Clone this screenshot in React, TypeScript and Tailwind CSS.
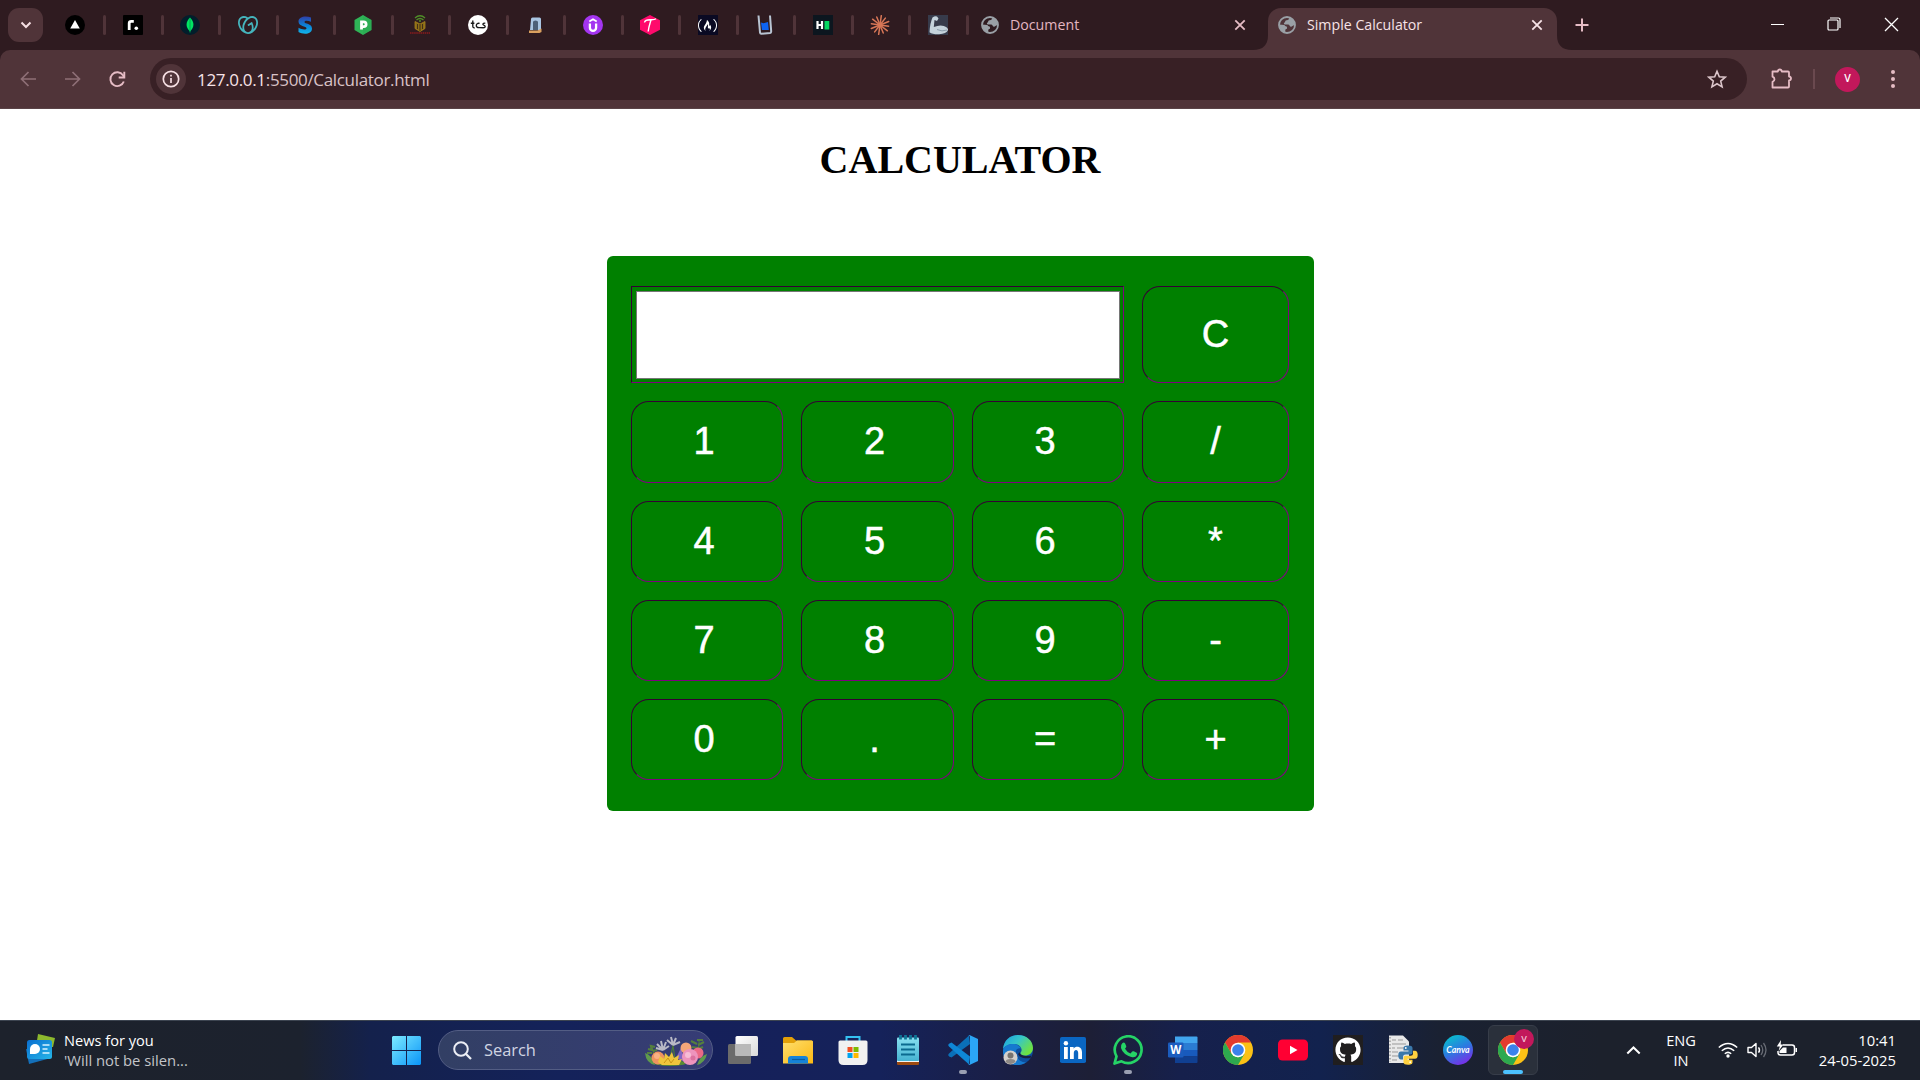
import React from "react";
import { SiGodaddy, SiFreecodecamp } from "react-icons/si";
import { FaGithub } from "react-icons/fa";

const Ico = ({ size = 20, box = "0 0 20 20", children }: { size?: number; box?: string; children: React.ReactNode }) => (
  <svg width={size} height={size} viewBox={box} fill="none" className="block shrink-0">{children}</svg>
);

const rays = Array.from({ length: 12 }, (_, i) => i * 30 + 8);

const favicons: React.ReactNode[] = [
  <Ico><circle cx="10" cy="10" r="10" fill="#000" /><path d="M10 5l4.800 8.600H5.200z" fill="#fff" /></Ico>,
  <Ico><rect width="20" height="20" rx="1" fill="#000" /><path d="M6.200 15V8.300q0-2 2-2h2.600" stroke="#fff" strokeWidth="2.800" /><circle cx="13.300" cy="13.300" r="1.800" fill="#fff" /></Ico>,
  <Ico><circle cx="10" cy="10" r="10" fill="#021e2b" /><path d="M10 2.500c4.500 4.500 4.700 9.500 0 14-4.700-4.500-4.500-9.500 0-14z" fill="#00e563" /><path d="M10 3v14.500" stroke="#00a050" strokeWidth=".9" /></Ico>,
  <SiGodaddy size={20} color="#45b5bd" />,
  <Ico><defs><linearGradient id="sg" x1="0" y1="0" x2="0" y2="1"><stop stopColor="#2f3fa8" /><stop offset=".55" stopColor="#0a86d8" /><stop offset="1" stopColor="#12b4e8" /></linearGradient></defs><path d="M16 2.500v4.200c-3-1.300-6.500-1.500-6.500.3 0 2 7.500 1.300 7.500 6.500 0 6-8.500 6.500-13.500 3.600v-4.300c3.500 2 8 2.200 8 .4 0-2-8-1.600-8-6.700C3.500 1 11.500.500 16 2.500z" fill="url(#sg)" /></Ico>,
  <Ico><path d="M10 0l8.500 5v10L10 20l-8.500-5V5z" fill="#2fb457" /><path d="M10 1v18l8.500-4V5z" fill="#27a350" opacity=".4" /><path d="M8.500 14.500V6.800h2.200a2.400 2.400 0 010 4.800H8.500" stroke="#fff" strokeWidth="2.800" /></Ico>,
  <Ico><path d="M5 3q5-4.500 10 0M6.500 5q3.500-3 7 0" stroke="#4f8f28" strokeWidth="1.300" /><circle cx="10" cy="6" r="1" fill="#4f8f28" /><path d="M5 6.500l5 2.500 5-2.500v7L10 16.500l-5-3z" fill="#8a6c17" stroke="#a5801c" strokeWidth=".8" /><path d="M7.500 9v5M12.500 9v5M10 9v7" stroke="#3a2718" strokeWidth=".9" /><path d="M0 18h20" stroke="#8a1d1d" strokeWidth="1.600" strokeDasharray="1.500 .6" /></Ico>,
  <Ico><circle cx="10" cy="10" r="10" fill="#fff" /><path d="M4.800 5.500v5.700q0 1.900 2 1.600M2.800 8.200h3.600M11.600 8.400c-4.200-1-4.600 5 0 4.200l4 .1c2.500-.3 1.500-2.100.2-2.600-1.800-.8-.5-2.400 1.500-1.700" stroke="#1a1a1a" strokeWidth="1.350" /></Ico>,
  <Ico><path d="M6 4q0-1.500 1.500-1.500h7q1.500 0 1.500 1.500v11H5z" fill="#a9c5e2" /><path d="M8 7q0-1.500 2.500-1.500T13 7v8H8z" fill="#4c6078" /><path d="M4 15.500h8.500l4-2v3.500l-2 1H4z" fill="#d9a05f" /></Ico>,
  <Ico><circle cx="10" cy="10" r="10" fill="#a435f0" /><path d="M6.300 6.500L10 4.300l3.700 2.200" stroke="#fff" strokeWidth="1.800" /><path d="M6.900 8.500v4.200a3.100 3.100 0 006.200 0V8.500" stroke="#fff" strokeWidth="2.300" /></Ico>,
  <Ico><path d="M10 0l10 5.200v9.600L10 20 0 14.800V5.200z" fill="#ff0a6c" /><path d="M4.500 7.500c.5-3 4-2.600 7-2.700 2 0 3.500-.3 4.500-1M11 5c-1 3.500-2.300 6.500-2.800 11.500" stroke="#fff" strokeWidth="1.400" /></Ico>,
  <span className="flex h-5 w-5 items-center justify-center bg-[#0a0a23]"><SiFreecodecamp size={19} color="#fff" /></span>,
  <Ico><path d="M3.500 .5l1.500 17q.2 1.300 1.500 1.200l8.500-.7q1.200-.2 1.200-1.500L15 .5" stroke="#b8c4d2" strokeWidth="2" /><path d="M6 7.500l2.500.8 4.500-1.300.8 8H7z" fill="#0d63f2" /></Ico>,
  <Ico><rect width="20" height="20" fill="#0c161f" /><path d="M4.500 6v8M9 6v8M4.500 10H9" stroke="#fff" strokeWidth="2.200" /><rect x="11.500" y="6" width="4.800" height="8.500" fill="#05d862" /></Ico>,
  <Ico>{rays.map((a, i) => <path key={a} d={i % 2 ? "M10 10V1.300" : "M10 10V.6"} stroke="#d97757" strokeWidth="1.500" strokeLinecap="round" transform={`rotate(${a} 10 10)`} />)}</Ico>,
  <Ico><rect width="20" height="20" fill="#373b4b" /><path d="M4.500 2.500Q7 .5 9 1.500l1.500 2L9 6 6.500 5 5.800 12q6-2.500 10-1 4.500 1.500 4.200 4-1.500 4-9 4.200-6.500.2-9.500-2Q2 8 4.500 2.500z" fill="#c5d2db" /><path d="M9 14.500q5 2.500 10 .5" stroke="#8b9dab" /></Ico>,
];

const Globe = () => (
  <Ico size={18}><circle cx="10" cy="10" r="8.900" stroke="#9aa0a6" strokeWidth="2" /><path d="M12.200 1.500c1 2-1.200 3.300-2.700 3.300-1.700 0-1.200 2.200-2.400 2.700-1 .5-.6 2 .6 2h3.500c1.800 0 1.500 2.300 3 2.500 1.600.200 1.700-1.500 4.500-2 0-5-3-7.500-6.500-8.500zM1.500 9.500l5.600.500c1 2 3 1 3 3s-2 1-2 2.800v2.700C4 17.500 1 14 1.500 9.500z" fill="#9aa0a6" /></Ico>
);

const X = ({ c }: { c: string }) => (
  <Ico size={12} box="0 0 12 12"><path d="M1.300 1.300l9.400 9.400M10.700 1.300L1.300 10.700" stroke={c} strokeWidth="1.800" /></Ico>
);

const TabStrip = () => (
  <div className="flex h-[50px] bg-[#2f1b20]">
    <div className="ml-2 mt-2 flex h-[34px] w-[35px] items-center justify-center rounded-[11px] bg-[#503439]">
      <Ico size={12} box="0 0 12 12"><path d="M1.500 3.500L6 8l4.500-4.500" stroke="#f6dfe3" strokeWidth="2" /></Ico>
    </div>
    <div className="ml-[5.500px] flex">
      {favicons.map((f, i) => (
        <div key={i} className="flex h-[50px] w-[57.5px] items-center">
          <div className="ml-[16.5px] flex w-5 justify-center">{f}</div>
          <div className="ml-[18px] mb-px h-5 w-[3px] shrink-0 rounded-full bg-[#503439]" />
        </div>
      ))}
    </div>
    <div className="flex h-[50px] w-[299.5px] shrink-0 items-center pl-[12.5px]">
      <Globe />
      <span className="ml-[11px] font-['Open_Sans'] text-[14.2px] text-[#e3b6c0]">Document</span>
      <div className="ml-auto mr-[22px]"><X c="#e6bcc5" /></div>
    </div>
    <div className="relative mt-[8px] flex h-[42px] w-[289px] shrink-0 items-center rounded-t-[13px] bg-[#503439] pb-2 pl-[10px]">
      <svg className="absolute bottom-0 -left-[15px]" width="15" height="15"><path d="M15 0v15H0Q15 15 15 0z" fill="#503439" /></svg>
      <svg className="absolute bottom-0 -right-[15px]" width="15" height="15"><path d="M0 0v15h15Q0 15 0 0z" fill="#503439" /></svg>
      <Globe />
      <span className="ml-[11px] font-['Open_Sans'] text-[14.2px] text-[#f7e3e7]">Simple Calculator</span>
      <div className="ml-auto mr-[14px]"><X c="#f7e3e7" /></div>
    </div>
    <div className="ml-[18px] flex h-[50px] items-center"><Ico size={14} box="0 0 14 14"><path d="M7 .5v13M.5 7h13" stroke="#e6bcc5" strokeWidth="2" /></Ico></div>
    <div className="ml-auto flex h-[48px] items-center">
      <div className="mr-[43px] h-px w-[13px] bg-white" />
      <Ico size={14} box="0 0 14 14"><path d="M3 1h8.500q1.500 0 1.500 1.500V11" stroke="#fff" strokeWidth="1.200" /><rect x="1" y="3" width="10" height="10" rx="1" stroke="#fff" strokeWidth="1.200" /></Ico>
      <div className="ml-[43px] mr-[21px]"><Ico size={15} box="0 0 15 15"><path d="M1 1l13 13M14 1L1 14" stroke="#fff" strokeWidth="1.300" /></Ico></div>
    </div>
  </div>
);

const Toolbar = () => (
  <div className="bg-[#2f1b20]">
    <div className="flex h-[59px] rounded-t-[10px] border-b border-[#5a4347] bg-[#503439] pt-2">
      <div className="flex h-[42px] w-[150px] items-center pl-[20px]">
        <Ico size={16} box="0 0 16 16"><path d="M16 8H2M8.500 1L1.500 8l7 7" stroke="#8e6f76" strokeWidth="1.700" /></Ico>
        <div className="ml-[29px]"><Ico size={16} box="0 0 16 16"><path d="M0 8h14M7.500 1l7 7-7 7" stroke="#8e6f76" strokeWidth="1.700" /></Ico></div>
        <div className="ml-[28px]"><Ico size={17} box="0 0 17 17"><path d="M14.800 10.500A6.900 6.900 0 1114 4.300L15 6" stroke="#e6bcc5" strokeWidth="1.900" /><path d="M15.300.800v5.700H9.700" stroke="#e6bcc5" strokeWidth="1.900" /></Ico></div>
      </div>
      <div className="flex h-[42px] w-[1597px] items-center rounded-full bg-[#382025] pl-[6px]">
        <div className="flex h-[30px] w-[30px] items-center justify-center rounded-full bg-[#503439]">
          <Ico size={18} box="0 0 18 18"><circle cx="9" cy="9" r="7.700" stroke="#f6dfe3" strokeWidth="1.700" /><path d="M9 8v5M9 4.800v1.800" stroke="#f6dfe3" strokeWidth="1.700" /></Ico>
        </div>
        <span className="ml-[11px] mt-px font-['Open_Sans'] text-[17px] tracking-[-0.33px] text-[#d8c2c7]"><span className="text-[#f7e3e7]">127.0.0.1</span>:5500/Calculator.html</span>
        <div className="ml-auto mr-[20px]"><Ico size={20}><path d="M10 2.200l2.300 5.500 5.900.500-4.500 3.900 1.400 5.800L10 14.800l-5.100 3.100 1.400-5.800-4.500-3.900 5.900-.500z" stroke="#dcc6cb" strokeWidth="1.600" /></Ico></div>
      </div>
      <div className="flex h-[42px] items-center pl-[23px]">
        <Ico size={22} box="0 0 22 22"><path d="M2.500 3.500h5.300q.3-2 2-2t2 2h6.200q1 0 1 1v4q2 .3 2 2t-2 2v6q0 1-1 1H2.500v-5.600q2-.7 2-2.600t-2-2.600z" stroke="#e6bcc5" strokeWidth="1.800" strokeLinejoin="round" /></Ico>
        <div className="ml-[21px] h-5 w-[2px] bg-[#6a494f]" />
        <div className="ml-[20px] flex h-[25px] w-[25px] items-center justify-center rounded-full bg-[#c2185b] pb-px font-['Open_Sans'] text-[10.5px] font-semibold text-white">V</div>
        <div className="ml-[30.5px] flex flex-col gap-[3px]">
          {[0, 1, 2].map((i) => <div key={i} className="h-[4px] w-[4px] rounded-full bg-[#e6bcc5]" />)}
        </div>
      </div>
    </div>
  </div>
);

const keyCls = "flex items-center justify-center rounded-[18px] border border-t-[#330033] border-l-[#330033] border-r-[#800080] border-b-[#800080] pb-[2px]";
const rows = [["1", "2", "3", "/"], ["4", "5", "6", "*"], ["7", "8", "9", "-"], ["0", ".", "=", "+"]];

const Calculator = () => (
  <main className="flex h-[911px] flex-col items-center bg-white">
    <h1 className="mt-[28px] h-[46px] font-['Liberation_Serif'] text-[40px] leading-[46px] font-bold text-black">CALCULATOR</h1>
    <div className="mt-[73px] mr-[-1px] grid h-[555px] w-[707px] grid-cols-[152px_153px_152px_147px] grid-rows-[97px_82px_repeat(3,81px)] gap-[18px] rounded-[6px] bg-[#008000] px-6 py-[30px] font-['Liberation_Sans'] text-[38px] leading-none text-white [-webkit-text-stroke:0.5px_white]">
      <div className="col-span-3 border border-t-[#330033] border-l-[#330033] border-r-[#800080] border-b-[#800080] pt-[4px] pr-[3px] pb-[3px] pl-[4px]">
        <div className="h-full w-full border border-[#767676] bg-white" />
      </div>
      <div className={keyCls}>C</div>
      {rows.flat().map((k, i) => (
        <div key={k} className={keyCls}>
          <span className={i % 4 < 3 ? "mr-[6px]" : ""}>{k}</span>
        </div>
      ))}
    </div>
  </main>
);

const Chrome = () => (
  <Ico size={30} box="0 0 30 30">
    <circle cx="15" cy="15" r="15" fill="#fbc116" />
    <path d="M2 7.500A15 15 0 0128 7.500H15L8.500 18.800z" fill="#e33b2e" />
    <path d="M2 7.500A15 15 0 0015 30l6.500-11.200L15 22.500l-6.500-3.700z" fill="#2da94f" />
    <circle cx="15" cy="15" r="7.300" fill="#fff" /><circle cx="15" cy="15" r="5.800" fill="#3b82ec" />
  </Ico>
);

const apps: React.ReactNode[] = [
  <Ico size={30} box="0 0 30 30"><defs><linearGradient id="tv" x1="0" y1="0" x2="1" y2="1"><stop stopColor="#fff" /><stop offset="1" stopColor="#d9d9d9" /></linearGradient></defs><rect x="0" y="9" width="23" height="20" rx="1.500" fill="#6b6b6b" /><rect x="7.500" y="1" width="22.500" height="20" rx="1.500" fill="url(#tv)" /><rect x="7.500" y="9" width="15.500" height="12" fill="#b9b9b9" /></Ico>,
  <Ico size={30} box="0 0 30 30"><defs><linearGradient id="fe" x1="0" y1="0" x2="1" y2="1"><stop stopColor="#ffdf6e" /><stop offset="1" stopColor="#fbb813" /></linearGradient></defs><path d="M0 3.500Q0 2 1.500 2H9l4 3.500h15q2 0 2 2V12H0z" fill="#e3a008" /><path d="M0 8h11l3-2.500h15l1 1V28.500H0z" fill="url(#fe)" /><path d="M5 28.500V24q0-3 3-3h14q3 0 3 3v4.500z" fill="#1683d8" /><path d="M9 24.500h13" stroke="#0b5c9f" strokeWidth="1.200" /></Ico>,
  <Ico size={30} box="0 0 30 30"><path d="M8.500 6V2h13v4" stroke="#35c1f1" strokeWidth="2" /><path d="M.5 7q0-1.500 1.500-1.500h26q1.500 0 1.500 1.500v18q0 5-5 5h-19q-5 0-5-5z" fill="#f1f1f1" /><rect x="9.500" y="12" width="5" height="5" fill="#f25022" /><rect x="15.500" y="12" width="5" height="5" fill="#7fba00" /><rect x="9.500" y="18" width="5" height="5" fill="#00a4ef" /><rect x="15.500" y="18" width="5" height="5" fill="#ffb900" /></Ico>,
  <Ico size={30} box="0 0 30 30"><rect x="4" y="25" width="22" height="5" rx="1" fill="#9c4a10" /><rect x="4" y="25" width="22" height="2" fill="#f3f3f3" /><defs><linearGradient id="np" x1="0" y1="0" x2="0" y2="1"><stop stopColor="#87dff0" /><stop offset="1" stopColor="#45b3d2" /></linearGradient></defs><rect x="4" y="2.500" width="22" height="23.500" rx="1" fill="url(#np)" /><path d="M8 9.500h14M8 14.500h14M8 19.500h14" stroke="#0b6a8f" strokeWidth="1.900" />{[7.5, 12.5, 17.5, 22.5].map((x) => <path key={x} d={`M${x} 0v4.500`} stroke="#0e7597" strokeWidth="2.800" />)}</Ico>,
  <Ico size={30} box="0 0 30 30"><path d="M22 9L3.500 22.500 1 21.300q-1.500-1.300 0-2.700L21 .5z" fill="#0a6fb8" /><path d="M22 21.500L3.500 7.500 1 8.700q-1.500 1.300 0 2.700L21 29.500z" fill="#0e86d6" /><path d="M21.500 0L30 4v22l-8.500 4q-1 0-1.500-.8 2 .8 2-1.700v-25Q22 0 20 .8z" fill="#2ba5f5" /></Ico>,
  <Ico size={30} box="0 0 30 30"><defs><linearGradient id="eg" x1="0" y1="0" x2="1" y2=".6"><stop stopColor="#1aa0df" /><stop offset=".5" stopColor="#36c6c9" /><stop offset="1" stopColor="#6fe23f" /></linearGradient></defs><circle cx="15" cy="15" r="15" fill="#0d4f9e" /><path d="M0 14C1 5 7 0 15 0c9 0 15 6 15 13 0 5-4 7.500-8 7.500-4 0-5.500-1.500-4-3.500 2-3-1-8-7-8-5 0-9 2-11 5z" fill="url(#eg)" /><path d="M0 15C2 10 6 9 10 9c4 0 7 2 8 4.500-4-1-6 2-5 6 1 5 6 8 10 8-12 7-24-1-23-12.500z" fill="#1679cf" /><path d="M17 17c-1 3 5 5 11.500 3.500l-1 2.500c-5 1-11 0-12.500-4z" fill="#191f42" /><circle cx="7.500" cy="22.500" r="7" fill="#d4d0cc" /><circle cx="7.500" cy="20.500" r="3" fill="#77736f" /><path d="M2.500 27q0-3 5-3t5 3q-5 4-10 0z" fill="#8d8985" /></Ico>,
  <Ico size={30} box="0 0 30 30"><rect x="2" y="2" width="26" height="26" rx="1.800" fill="#0a66c2" /><circle cx="7.900" cy="8.200" r="2.200" fill="#fff" /><path d="M6 12h3.800v12H6zM12 12h3.600v1.700c2-3.300 8.400-2.500 8.400 3.500V24h-3.800v-6c0-4-4.400-3.800-4.400 0v6H12z" fill="#fff" /></Ico>,
  <Ico size={30} box="0 0 30 30"><path d="M1.500 28.500l2-7.200a13.400 13.400 0 115 5z" stroke="#25d366" strokeWidth="2.700" strokeLinejoin="round" /><path d="M9.500 8q1.500-1.300 2.500.3l1.300 3q.3.800-1.300 2.500 2 3.500 5.500 4.700l1.700-2q.6-.6 1.500-.2l3 1.500q.9.500.2 2.200-1.500 3-5.500 2Q10 19.500 8 13q-.7-3 1.500-5z" fill="#25d366" /></Ico>,
  <Ico size={30} box="0 0 30 30"><path d="M7 1.500h21.500q1 0 1 1V8H7z" fill="#41a5ee" /><path d="M7 8h22.500v7H7z" fill="#2b7cd3" /><path d="M7 15h22.500v6.500H7z" fill="#185abd" /><path d="M7 21.500h22.500V27q0 1-1 1H7z" fill="#103f91" /><rect x="0" y="7.500" width="15.500" height="15" rx="1.200" fill="#1b5cbe" /><text x="7.700" y="19" textAnchor="middle" fontFamily="Open Sans" fontWeight="700" fontSize="11.500" fill="#fff">W</text></Ico>,
  <Chrome />,
  <Ico size={30} box="0 0 30 30"><rect y="4.500" width="30" height="21" rx="4.500" fill="#ff0033" /><path d="M12 10.700l7.500 4.300-7.500 4.300z" fill="#fff" /></Ico>,
  <div className="flex h-[30px] w-[30px] items-center justify-center bg-[#201e1f]"><FaGithub size={26} color="#fff" /></div>,
  <div className="relative h-[30px] w-[30px]">
    <Ico size={30} box="0 0 30 30"><path d="M1 .5h14l6 6V28H1z" fill="#e8e8e8" /><path d="M4 5h4M10 5h5M4 9h14M4 13h3M9 13h9M4 17h6M4 21h7M4 25h5" stroke="#999" strokeWidth="1" /><path d="M2 2v25" stroke="#777" strokeDasharray="1.500 2" /></Ico>
    <svg className="absolute left-[10px] top-[10px]" width="20" height="20" viewBox="0 0 20 20"><path d="M10 .5C6.500.5 5.500 1.500 5.500 3v2.500h5v1H3C1 6.500.3 8 .3 10.500S1.500 14.500 3 14.500h2V12q0-2.500 2.500-2.500h5q2 0 2-2V3c0-1.700-1.500-2.500-4.500-2.500z" fill="#3a78ab" /><path d="M10 19.700c3.500 0 4.500-1 4.500-2.500v-2.500h-5v-1H17c2 0 2.700-1.500 2.700-4S18.500 5.700 17 5.700h-2v2.500q0 2.500-2.500 2.500h-5q-2 0-2 2v4.500c0 1.700 1.500 2.500 4.500 2.500z" fill="#ffd140" /><circle cx="7.800" cy="3" r=".9" fill="#fff" /><circle cx="12.200" cy="17.200" r=".9" fill="#fff" /></svg>
  </div>,
  <Ico size={30} box="0 0 30 30"><defs><linearGradient id="cv" x1=".2" y1="0" x2=".7" y2="1"><stop stopColor="#06c3cc" /><stop offset=".5" stopColor="#2b7be0" /><stop offset="1" stopColor="#7d2ae8" /></linearGradient></defs><circle cx="15" cy="15" r="15" fill="url(#cv)" /><text x="15" y="18" textAnchor="middle" fontFamily="Lato" fontStyle="italic" fontWeight="700" fontSize="8.800" fill="#fff">Canva</text></Ico>,
];

const Flowers = () => (
  <svg width="62" height="31" viewBox="0 0 62 31" fill="none">
    <path d="M0 17q7 2 10 12-9-2-10-12zM62 18q-7 2-10 11 8-2 10-11z" fill="#5f9a4c" />
    <path d="M8 24Q10 16 6 9M24 26l4-16M30 24L28 9M50 20q5-8 4-17" stroke="#4c7a3a" strokeWidth="1.200" />
    <path d="M3 13l4 1-1-4 4 1M2 17l5 0M8 15l4-1M46 5l6 3M47 11l6 1M52 4l6 0M53 9l6-3M53 13l5-2" stroke="#557f3e" strokeWidth="2.200" />
    <path d="M18 14l-6-6M18 14l-2-9M18 14l3-8M18 14l-7-2M18 14l6-4M28 9l-6-5M28 9l-2-8M28 9l3-7M28 9l7-3" stroke="#b9bac6" strokeWidth="2" />
    <ellipse cx="25" cy="27" rx="16" ry="3" fill="#5a8a35" />
    <circle cx="13" cy="22" r="6.500" fill="#ef9360" /><circle cx="12" cy="20" r="3" fill="#f8b184" />
    <path d="M36 12l4 14-9-4z" fill="#8165c4" />
    <circle cx="41" cy="12" r="5.500" fill="#f5a679" /><circle cx="53" cy="17" r="5.500" fill="#ec6a86" />
    <circle cx="45" cy="21" r="8" fill="#ee94bd" /><circle cx="43" cy="19" r="3" fill="#f7bdd6" /><circle cx="48" cy="22" r="2.500" fill="#dc719f" />
    <path d="M13 26l2-6 4 3 1-6 4 4 3-5 2 6 5-3-1 5 4-1-3 6H17z" fill="#efc53c" />
    <path d="M19 27l4-5 3 5 3-4" stroke="#c99416" />
  </svg>
);

const Taskbar = () => (
  <footer className="flex h-[60px] items-center border-t border-[#3c4450] bg-[linear-gradient(90deg,#1d222c_0px,#1c222e_300px,#14214c_370px,#14225a_560px,#15205a_700px,#15225a_880px,#1a1f46_1000px,#1d1f36_1090px,#16204c_1180px,#12224e_1320px,#1a2132_1440px,#1c212c_1600px,#1c212c_1920px)] font-['Open_Sans'] text-white">
    <div className="flex h-full w-[392px] items-center pl-[25px]">
      <svg className="-mt-[3px]" width="31" height="30" viewBox="0 0 31 30"><defs><linearGradient id="nw" x1="0" y1="0" x2="1" y2="1"><stop stopColor="#0a6fd0" /><stop offset="1" stopColor="#25b5e8" /></linearGradient></defs><path d="M13 0l17 4-2 9H11z" fill="#8db92e" /><path d="M1 15l3 15 22-6V20z" fill="#1470ba" /><rect x="2" y="6" width="25" height="19" rx="2.500" fill="url(#nw)" /><circle cx="10" cy="15" r="5" fill="#fff" /><path d="M5 20v-5h5v5z" fill="#fff" /><path d="M17.500 11h7M17.500 15h5M17.500 19h7" stroke="#d8f4ff" strokeWidth="1.700" /></svg>
      <div className="ml-[8px] -mt-[1px] leading-5">
        <div className="text-[14.6px]">News for you</div>
        <div className="text-[14.8px] text-[#c3c5c9]">'Will not be silen...</div>
      </div>
    </div>
    <Ico size={29} box="0 0 29 29"><defs><linearGradient id="wn" x1="0" y1="0" x2="1" y2="1"><stop stopColor="#7ceaff" /><stop offset="1" stopColor="#0a94f8" /></linearGradient></defs><path d="M1 0h13v14H0V1zM15 0h13l1 1v13H15zM0 15h14v14H1l-1-1zM15 15h14v13l-1 1H15z" fill="url(#wn)" /></Ico>
    <div className="ml-[17px] -mt-px flex h-10 w-[275px] items-center rounded-full border border-[#535d84] bg-[linear-gradient(90deg,#323f64,#363c76)] pl-[14px]">
      <Ico size={19} box="0 0 19 19"><circle cx="8" cy="8" r="6.800" stroke="#eceef5" strokeWidth="2" /><path d="M12.500 12.500l5.500 5.500" stroke="#eceef5" strokeWidth="2.300" /></Ico>
      <span className="ml-[12px] text-[16.4px] text-[#d0d4e2]">Search</span>
      <div className="ml-auto mr-[5px] mt-[3px]"><Flowers /></div>
    </div>
    <div className="ml-[2.500px] flex h-full">
      {apps.map((a, i) => (
        <div key={i} className="flex h-full w-[55px] flex-col items-center pt-[14px]">
          {a}
          {(i === 4 || i === 7) && <div className="mt-[5px] h-1 w-2 rounded-full bg-[#9a9fb2]" />}
        </div>
      ))}
      <div className="relative mt-[4px] ml-[2.500px] flex h-[50px] w-[50px] flex-col items-center rounded-[6px] border border-[#373d49] bg-[#2a303b] pt-[9px]">
        <Chrome />
        <div className="mt-[5px] h-1 w-5 shrink-0 rounded-full bg-[#4cc2ff]" />
        <div className="absolute top-[3px] right-[3px] flex h-5 w-5 items-center justify-center rounded-full bg-[#c2185b] text-[9px] font-semibold text-[#f3c4d6]">V</div>
      </div>
    </div>
    <div className="ml-auto flex h-full w-[294px] items-center pr-[24px] pb-px">
      <Ico size={15} box="0 0 15 15"><path d="M1.300 10.500L7.500 4.500l6.200 6" stroke="#fff" strokeWidth="2" /></Ico>
      <div className="ml-[20px] w-[40px] text-center text-[14.6px] leading-5">ENG<br />IN</div>
      <div className="ml-[17px]"><Ico size={20}><path d="M.8 7.500q9.200-8 18.400 0M3.800 10.700q6.200-5.500 12.400 0M6.800 13.800q3.200-2.800 6.400 0" stroke="#fff" strokeWidth="1.500" /><circle cx="10" cy="16" r="1.700" fill="#fff" /></Ico></div>
      <div className="ml-[9px]"><Ico size={20}><path d="M1 7.500h3.500L9 3.500v13l-4.500-4H1z" stroke="#fff" strokeWidth="1.400" strokeLinejoin="round" /><path d="M11.500 7.300q2 2.700 0 5.400" stroke="#fff" strokeWidth="1.400" /><path d="M14 5q3.500 5 0 10M16.500 3q5 7 0 14" stroke="#676b74" strokeWidth="1.300" /></Ico></div>
      <div className="ml-[9px]"><Ico size={22} box="0 0 22 22"><path d="M7 6h9q2.500 0 2.500 2.500v5q0 2.500-2.500 2.500H4.500Q2 16 2 13.500V12" stroke="#fff" strokeWidth="1.500" /><path d="M19.500 9h1.500v4h-1.500z" fill="#fff" /><path d="M7 8.500h3.500V14H3.500v-2z" fill="#fff" /><path d="M5 1L.8 7.500h3L2.500 12l5-6.500H4.700z" fill="#fff" /></Ico></div>
      <div className="ml-auto text-right text-[14.8px] leading-5">10:41<br />24-05-2025</div>
    </div>
  </footer>
);

export default function App() {
  return (
    <div className="flex h-[1080px] w-[1920px] flex-col overflow-hidden bg-white">
      <TabStrip />
      <Toolbar />
      <Calculator />
      <Taskbar />
    </div>
  );
}
